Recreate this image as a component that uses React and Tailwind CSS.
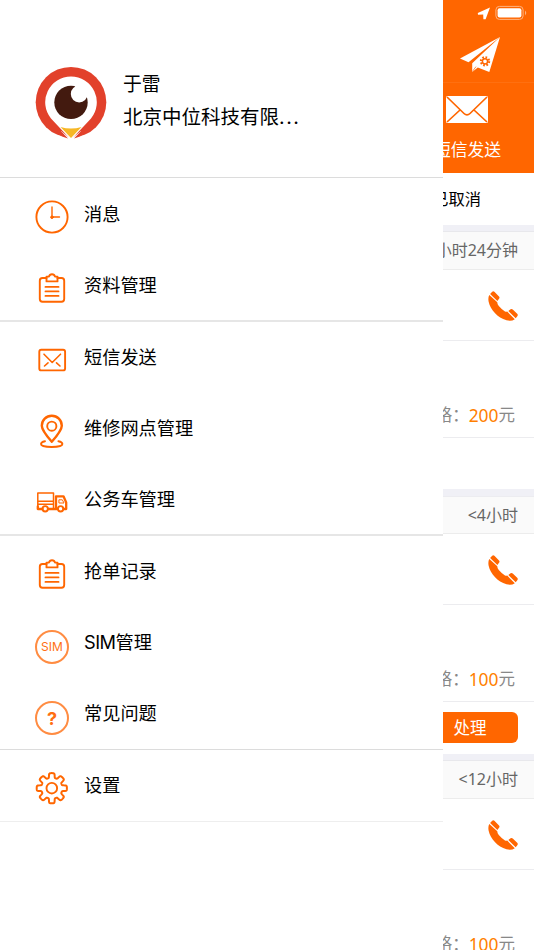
import React from "react";

const ORANGE = "#ff6600";

function Avatar() {
  return (
    <svg className="h-[74px] w-[72px] shrink-0" viewBox="0 0 72 74">
      <circle cx="36" cy="37.2" r="35.3" fill="#e2412b" />
      <path d="M26 66 L36 74 L46 66 L46 74 L26 74 Z" fill="#fff" />
      <path d="M36 11.4 A25.8 25.8 0 0 1 56 53.5 L36.6 74.2 L35.4 74.2 L16 53.5 A25.8 25.8 0 0 1 36 11.4 Z" fill="#fff" />
      <path d="M25.5 62 Q36 65 46.5 62 L36 73 Z" fill="#f6b726" />
      <path d="M24 64 L33 73.5 L27 71.5 L22 68 Z M48 64 L39 73.5 L45 71.5 L50 68 Z" fill="#e2412b" />
      <circle cx="36" cy="37.4" r="16.7" fill="#431a0f" />
      <circle cx="44.2" cy="29" r="8.4" fill="#fff" />
      <path d="M39 20.5 L54 20.5 L54 34 L49 30 Z" fill="#fff" />
    </svg>
  );
}

function Icon({ children }) {
  return (
    <svg
      className="h-[36px] w-[36px] shrink-0"
      viewBox="0 0 36 36"
      fill="none"
      stroke={ORANGE}
      strokeWidth="1.9"
      strokeLinecap="round"
      strokeLinejoin="round"
    >
      {children}
    </svg>
  );
}

const Clock = () => (
  <Icon>
    <circle cx="18" cy="18" r="15.6" />
    <path d="M18 8V18H25.5" strokeWidth="1.4" />
    <circle cx="18" cy="18.2" r="1.3" fill={ORANGE} strokeWidth="1" />
  </Icon>
);

const Clipboard = () => (
  <Icon>
    <path d="M12.5 8H8.5Q5.8 8 5.8 10.7V29.1Q5.8 31.8 8.5 31.8H27.5Q30.2 31.8 30.2 29.1V10.7Q30.2 8 27.5 8H23.5" />
    <path d="M12.5 11.4V6.6H15Q15.6 4.2 18 4.2T21 6.6H23.5V11.4Z" />
    <path d="M11.5 16.9H24.5M11.5 21.4H24.5M11.5 25.9H24.5" />
  </Icon>
);

const Mail = () => (
  <Icon>
    <rect x="5.3" y="7.8" width="25.8" height="20.6" rx="2" />
    <path d="M10 12.2L18.2 20.5L26.5 12.2M10.5 24L14 20.8M22.5 20.8L26 24" strokeWidth="1.6" />
  </Icon>
);

const Pin = () => (
  <Icon>
    <path d="M17.8 28.8Q7.8 17.3 7.8 12.7A10 10 0 0 1 27.8 12.7Q27.8 17.3 17.8 28.8Z" strokeWidth="2.4" />
    <circle cx="17.8" cy="13.2" r="4.6" />
    <path d="M11 28.2Q7 29 7 30.9C7 32.8 11.7 34 17.7 34S28.4 32.8 28.4 30.9Q28.4 29 24.4 28.2" />
  </Icon>
);

const Truck = () => (
  <Icon>
    <path d="M14.5 25H19.5V9H3.8V25M4 17.3H19.5M4 20.2H19.5" strokeWidth="1.5" />
    <path d="M8.5 25H3.8V22.5M14 25H23.5M29.5 25H32.2V18.5L29.5 12.3H22V25" strokeWidth="2.3" />
    <path d="M25.3 15.8H28.3L30 19H25.3Z" strokeWidth="1" />
    <circle cx="11.2" cy="24.8" r="2.7" />
    <circle cx="26.6" cy="24.8" r="2.7" />
  </Icon>
);

const Badge = ({ children, className }) => (
  <div className="flex h-[38px] w-[36px] shrink-0 items-end justify-center">
    <div
      className={`flex size-[34px] items-center justify-center rounded-full border-2 border-[#ff8c42] text-[#ff6f12] ${className}`}
    >
      {children}
    </div>
  </div>
);

function Gear() {
  const pts = [];
  for (let i = 0; i <= 240; i++) {
    const a = (i / 240) * Math.PI * 2;
    const r = 12.8 + 2.3 * Math.tanh(2.8 * (Math.cos(8 * a) + 0.22));
    pts.push(`${(17.8 + r * Math.sin(a)).toFixed(2)},${(18.2 - r * Math.cos(a)).toFixed(2)}`);
  }
  return (
    <Icon>
      <polygon points={pts.join(" ")} strokeWidth="2" />
      <circle cx="17.8" cy="18.2" r="5.3" />
    </Icon>
  );
}

function Item({ icon, label }) {
  return (
    <div className="flex h-[71px] items-center pl-[34px]">
      <div className="pt-[5px]">{icon}</div>
      <span className="ml-[14px] pb-px text-[18.2px] leading-6">{label}</span>
    </div>
  );
}

function Drawer() {
  return (
    <aside className="h-full w-[443px] shrink-0 bg-white text-black">
      <header className="flex h-[178px] items-start border-b border-[#dcdcdc] pt-[65px] pl-[35px]">
        <Avatar />
        <div className="ml-4 pt-[4px] text-[18.8px]">
          <p className="h-8 leading-8">于雷</p>
          <p className="h-8 text-[19.5px] leading-8">
            北京中位科技有限<span className="tracking-[1.5px]">...</span>
          </p>
        </div>
      </header>
      <section className="h-[144px] border-b-2 border-[#e6e6e6] pt-px">
        <Item icon={<Clock />} label="消息" />
        <Item icon={<Clipboard />} label="资料管理" />
      </section>
      <section className="h-[214px] border-b-2 border-[#e6e6e6]">
        <Item icon={<Mail />} label="短信发送" />
        <Item icon={<Pin />} label="维修网点管理" />
        <Item icon={<Truck />} label="公务车管理" />
      </section>
      <section className="h-[214px] border-b border-[#dcdcdc]">
        <Item icon={<Clipboard />} label="抢单记录" />
        <Item
          icon={<Badge className="text-[12px]">SIM</Badge>}
          label={<><span className="tracking-[-0.5px]">SIM</span>管理</>}
        />
        <Item icon={<Badge className="text-[18px] font-bold">?</Badge>} label="常见问题" />
      </section>
      <section className="h-[72px] border-b border-[#eeeeee]">
        <Item icon={<Gear />} label="设置" />
      </section>
    </aside>
  );
}

function Phone() {
  return (
    <svg className="h-[30px] w-[30px]" viewBox="0 0 30 30" fill={ORANGE}>
      <path d="M1.3 4L9.3 11.2Q9.2 13 10.8 15Q14 18.8 17 20.4Q18.2 20.8 19.2 20.6L26.8 28.2Q23.5 30.6 18.5 29.3C9.5 26.5 2.5 19 .7 11Q-.2 6.5 1.3 4Z" />
      <path d="M2.1 3.1L4.2 .8Q5.3-.2 6.4.8L11 5.5Q12 6.7 11 7.8L9.4 9.9Z" />
      <path d="M20.3 19.9L22.6 18.3Q23.8 17.5 25 18.7L29.2 22.8Q30.4 24 29.3 25.2L27.7 27.2Z" />
    </svg>
  );
}

function Card({ time, price, action, headClass, footClass }) {
  return (
    <>
      <div
        className={`flex items-center justify-end border-b border-[#ececec] bg-[#fafafa] pr-4 pb-px font-['Noto_Sans','Noto_Sans_CJK_SC',sans-serif] text-[16px] whitespace-nowrap text-[#666] ${headClass}`}
      >
        {time}
      </div>
      <div className="flex h-[71px] items-center justify-end border-b border-[#ececef] pt-px pr-4">
        <Phone />
      </div>
      <div className="flex h-[97px] items-end justify-end border-b border-[#ececef] pr-[19px] pb-[10px] text-[16.5px] leading-6 whitespace-nowrap text-[#888]">
        价格：
        <span className="font-['Noto_Sans',sans-serif] text-[17.4px] text-[#ff7f00]">{price}</span>
        元
      </div>
      <div className={`flex justify-end pt-[10px] pr-4 ${footClass}`}>
        {action && (
          <div className="flex h-[31px] w-[96px] shrink-0 items-center justify-center rounded-[6px] bg-[#ff6600] pt-px text-[16.5px] text-white">
            处理
          </div>
        )}
      </div>
    </>
  );
}

function Orders() {
  return (
    <main className="flex h-full w-[91px] flex-col overflow-hidden bg-white">
      <div className="flex h-[26px] shrink-0 items-center justify-end bg-[#ff6600] pr-1.5">
        <svg className="h-[16px] w-[51px]" viewBox="0 0 51 16">
          <path d="M.8 8L13 2.4L8.6 14.2L6.4 14.2L6.2 9.6L1 9.8Z" fill="#fff" />
          <rect x="18.9" y="1.4" width="27.2" height="13" rx="3.5" fill="none" stroke="#ffb27f" strokeWidth="1" />
          <rect x="20.6" y="3.2" width="23.8" height="9.4" rx="2" fill="#fff" />
          <path d="M48 5.6Q50.5 8 48 10.4Z" fill="#ffb27f" />
        </svg>
      </div>
      <div className="flex h-[57px] shrink-0 items-start border-b border-[#ff7010] bg-[#ff6600] pt-[11px] pl-4">
        <svg className="h-[36px] w-[42px]" viewBox="0 0 42 36">
          <path d="M41 0L1 21.5L9.5 25.2Z" fill="#fff" />
          <path d="M41 0L13.2 26.2V35L18.8 30.4L30.3 35Z" fill="#fff" />
          <path d="M13.4 34.5L17 29.6" stroke="#ff6600" strokeWidth=".7" />
          <circle cx="26" cy="24.3" r="4" fill="none" stroke={ORANGE} strokeWidth="2.4" strokeDasharray="1.6 1.54" />
          <circle cx="26" cy="24.3" r="2.6" fill="none" stroke={ORANGE} strokeWidth="1.5" />
        </svg>
      </div>
      <div className="flex h-[90px] shrink-0 flex-col bg-[#ff6600] pt-[13px] text-white">
        <svg className="ml-[3px] h-[27px] w-[42px] shrink-0" viewBox="0 0 42 27">
          <rect width="42" height="27" rx="1.5" fill="#fff" />
          <path d="M1 1L18 17.5Q21 20.3 24 17.5L41 1M1 26L14 14M41 26L28 14" fill="none" stroke={ORANGE} strokeWidth="1.7" />
        </svg>
        <span className="mt-[15px] -ml-[9px] text-[16.8px] leading-6 whitespace-nowrap">短信发送</span>
      </div>
      <div className="flex h-[52px] shrink-0 items-center justify-end pr-[53px] text-[16.3px] whitespace-nowrap text-black">
        已取消
      </div>
      <div className="h-[7px] shrink-0 border-b border-[#e8e8ec] bg-[#f0f0f6]" />
      <div className="shrink-0">
        <Card time="小时24分钟" price="200" headClass="h-[38px]" footClass="h-[51px]" />
      </div>
      <div className="h-[8px] shrink-0 border-b border-[#ececf0] bg-[#f0f0f6]" />
      <div className="shrink-0">
        <Card time="<4小时" price="100" action headClass="h-[37px]" footClass="h-[52px]" />
      </div>
      <div className="h-[7px] shrink-0 border-b border-[#e8e8ec] bg-[#f0f0f6]" />
      <div className="shrink-0">
        <Card time="<12小时" price="100" action headClass="h-[38px]" footClass="h-[52px]" />
      </div>
    </main>
  );
}

export default function App() {
  return (
    <div className="flex h-[950px] w-[534px] overflow-hidden bg-white font-[Inter,'Noto_Sans_CJK_SC',sans-serif]">
      <Drawer />
      <Orders />
    </div>
  );
}
